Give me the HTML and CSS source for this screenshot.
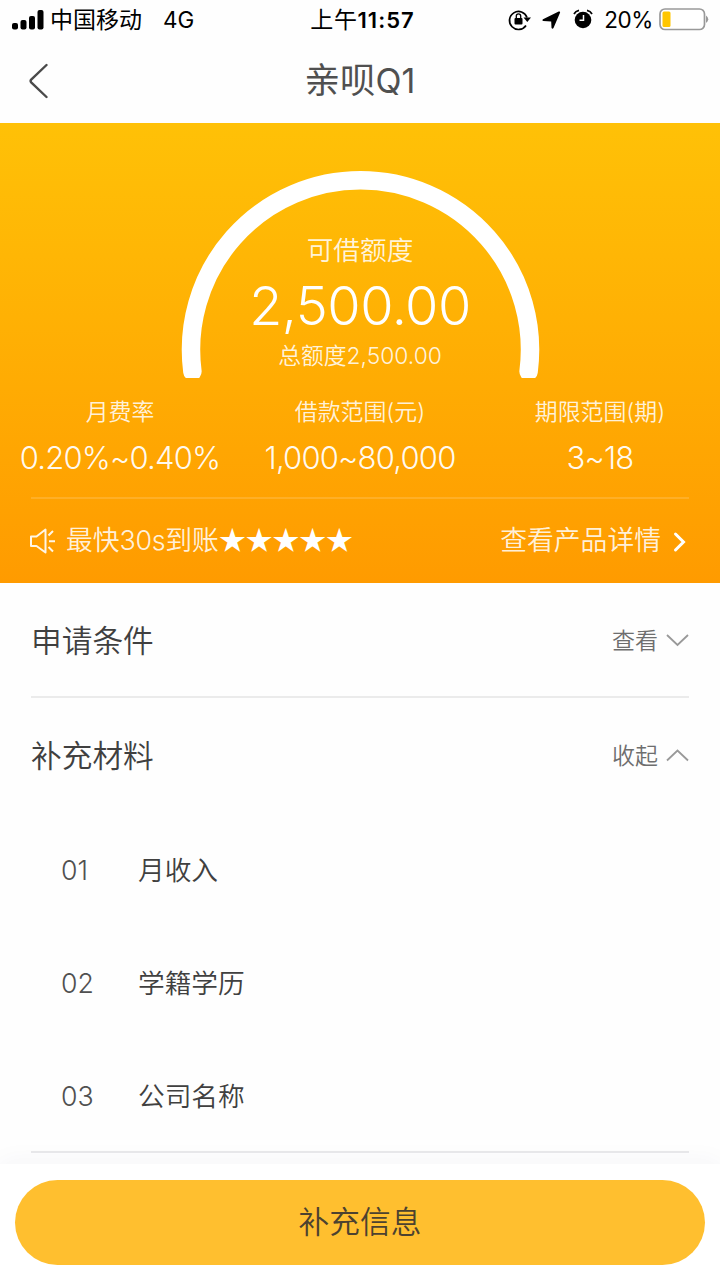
FILE: index.html
```
<!DOCTYPE html>
<html lang="zh-CN">
<head>
<meta charset="utf-8">
<title>亲呗Q1</title>
<link rel="stylesheet" href="styles.css">
</head>
<body>
<div class="app">
  <header class="status">
    <div class="status-left">
      <svg class="signal" width="32" height="20" viewBox="0 0 32 20"><rect x="0" y="13" width="6" height="6.5" rx="2"/><rect x="8.5" y="10" width="6" height="9.5" rx="2"/><rect x="17" y="6" width="6" height="13.5" rx="2"/><rect x="25.500" y="0" width="6" height="19.500" rx="2"/></svg>
      <span class="carrier">中国移动</span><span class="network">4G</span>
    </div>
    <div class="time">上午<b class="clock">11:57</b></div>
    <div class="status-right">
      <svg class="rotation" width="24" height="22" viewBox="0 0 24 22"><path d="M18 16.500A9 9 0 1 1 19 8.500" fill="none" stroke="#000" stroke-width="1.700"/><path d="M15.500 8.500h7.500l-3.700 4.500z"/><rect x="6.500" y="9" width="8" height="6.500" rx="1"/><path d="M8.300 9V7a2.200 2.200 0 0 1 4.400 0v2" fill="none" stroke="#000" stroke-width="1.300"/></svg>
      <svg class="location" width="19" height="18" viewBox="0 0 19 18"><path d="M1 8.200 16.700.6q1.800-.5 1.300 1.200L11.500 17q-1.200 1.500-2-.2L9.200 10.500 1.400 10q-1.700-.6-.4-1.800z"/></svg>
      <svg class="alarm" width="20" height="20" viewBox="0 0 20 20"><circle cx="10" cy="11" r="8.300"/><path d="M1 5Q2.500 2 6 1.300M14 1.300Q17.500 2 19 5" fill="none" stroke="#000" stroke-width="1.700"/><path d="M10.500 6v5.300H6.500" fill="none" stroke="#fff" stroke-width="1.500"/></svg>
      <span class="percent">20%</span>
      <svg class="battery" width="50" height="23" viewBox="0 0 50 23"><rect x="1" y="1" width="44.500" height="20.500" rx="5" fill="#fff" stroke="#999" stroke-width="1.700"/><rect x="3.500" y="3.500" width="8" height="15.500" rx="1.500" fill="#ffc600"/><path d="M47 7.500q4.500 3.700 0 7.500z" fill="#999"/></svg>
    </div>
  </header>
  <nav class="nav">
    <svg class="back" width="20" height="36" viewBox="0 0 20 36"><path d="M17.500 2 2.200 16.600q-1.200 1.400 0 2.800L17.500 34" fill="none" stroke="#4a4a4a" stroke-width="2.400" stroke-linecap="round"/></svg>
    <h1 class="title">亲呗<span class="title-code">Q1</span></h1>
    <span></span>
  </nav>
  <section class="hero">
    <div class="gauge">
      <svg class="arc" width="360" height="208" viewBox="0 0 360 208"><path d="M12.400 201.500A169.500 169.500 0 1 1 348.600 201.500" fill="none" stroke="#fff" stroke-width="18.500" stroke-linecap="round"/></svg>
      <div class="quota">
        <p class="quota-label">可借额度</p>
        <p class="quota-value">2,500.00</p>
        <p class="quota-total">总额度<span class="total-value">2,500.00</span></p>
      </div>
    </div>
    <div class="facts">
      <div class="fact"><p class="fact-label">月费率</p><p class="fact-value rate">0.20%~0.40%</p></div>
      <div class="fact"><p class="fact-label">借款范围(元)</p><p class="fact-value range">1,000~80,000</p></div>
      <div class="fact"><p class="fact-label">期限范围(期)</p><p class="fact-value">3~18</p></div>
    </div>
    <div class="notice">
      <svg class="horn" width="26" height="26" viewBox="0 0 26 26"><path d="M1 8.500H6.500L15.500 1.500V24.500L6.500 18H1z M18.500 7.500l4.500-4.500M19 13.200H25M18.500 19l4.500 4.500" fill="none" stroke="#fff" stroke-opacity=".9" stroke-width="2" stroke-linejoin="round"/></svg>
      <span class="notice-text">最快<span class="seconds">30s</span>到账</span>
      <span class="stars">★★★★★</span>
      <a class="detail">查看产品详情</a>
      <svg class="chevron" width="14" height="22" viewBox="0 0 14 22"><path d="M2.500 3 10.500 11 2.500 19" fill="none" stroke="#fff" stroke-width="3" stroke-linecap="round"/></svg>
    </div>
  </section>
  <main class="content">
    <section class="row first">
      <h2 class="row-title">申请条件</h2><span class="toggle">查看</span>
      <svg class="caret" width="24" height="14" viewBox="0 0 24 14"><path d="M2 2 12.500 12 23 2" fill="none" stroke="#999" stroke-width="1.800"/></svg>
    </section>
    <section class="row">
      <h2 class="row-title">补充材料</h2><span class="toggle">收起</span>
      <svg class="caret" width="24" height="14" viewBox="0 0 24 14"><path d="M2 12.500 12.500 2.500 23 12.500" fill="none" stroke="#999" stroke-width="1.800"/></svg>
    </section>
    <ol class="items">
      <li class="item"><span class="number">01</span><span class="name">月收入</span></li>
      <li class="item"><span class="number">02</span><span class="name">学籍学历</span></li>
      <li class="item"><span class="number">03</span><span class="name">公司名称</span></li>
    </ol>
  </main>
  <footer class="footer"><button class="submit">补充信息</button></footer>
</div>
</body>
</html>
```
FILE: styles.css
```
* { box-sizing: border-box; }
body { margin: 0; background: #fefefe; font-family: Inter, "Noto Sans CJK SC", sans-serif; color: #404040; }
h1, h2, p, ol { margin: 0; padding: 0; font-weight: 350; }
svg { display: block; flex: none; }
.app { width: 720px; height: 1280px; display: flex; flex-direction: column; overflow: hidden; white-space: nowrap; }
.status { height: 40px; display: grid; grid-template-columns: 1fr auto 1fr; align-items: center; padding: 0 11px 0 12px; color: #000; font-size: 23px; line-height: 40px; }
.status-left, .status-right { display: flex; align-items: center; }
.status-right { justify-content: flex-end; }
.signal { margin-top: -1px; }
.carrier { margin-left: 6px; }
.network { margin-left: 21px; font-size: 22.500px; }
.time { letter-spacing: .6px; padding-left: 4px; }
.clock { font-weight: 600; font-size: 22px; letter-spacing: 1px; }
.rotation { margin-top: -1px; }
.location { margin-left: 10px; }
.alarm { margin: -2px 0 0 12px; }
.percent { margin: 0 6px 0 11px; font-size: 22.500px; letter-spacing: -.4px; }
.battery { margin-top: -1px; }
.nav { height: 83px; display: grid; grid-template-columns: 1fr auto 1fr; align-items: center; padding: 0 29px; }
.back { margin-top: -2px; }
.title { font-size: 35.500px; line-height: 80px; padding-bottom: 1px; color: #505050; font-weight: 400; }
.title-code { font-size: 34px; }
.hero { height: 460px; background: linear-gradient(#ffc107, #ff9b00); padding-top: 47px; color: rgba(255,255,255,.87); font-weight: 350; }
.gauge { width: 360px; height: 208px; margin: 0 auto; display: grid; }
.arc, .quota { grid-area: 1 / 1; }
.quota { padding-top: 61px; text-align: center; }
.quota-label { font-size: 26.700px; line-height: 38px; }
.quota-value { font-size: 54px; line-height: 73px; letter-spacing: -.5px; font-weight: 300; color: #fff; }
.quota-total { font-size: 22.800px; line-height: 27px; }
.total-value { font-weight: 300; }
.facts { height: 119px; display: grid; grid-template-columns: repeat(3, 240px); padding-top: 18px; text-align: center; }
.fact-label { font-size: 22.900px; line-height: 33px; }
.fact-value { font-size: 31px; line-height: 57px; letter-spacing: -.8px; font-weight: 300; color: rgba(255,255,255,.95); }
.notice { height: 86px; margin: 0 31px; border-top: 2px solid rgba(255,255,255,.15); display: flex; align-items: center; font-size: 26.800px; line-height: 40px; padding-bottom: 2px; }
.horn { margin: 2px 0 0 -1px; }
.notice-text { margin-left: 10px; }
.seconds { font-weight: 300; letter-spacing: -.3px; }
.stars { color: #fff; font-family: "Noto Sans CJK SC", sans-serif; padding-bottom: 3px; }
.detail { margin-left: auto; }
.chevron { margin: 3px 2px 0 12px; }
.content { flex: 1; }
.row { height: 115px; margin: 0 31px; display: flex; align-items: center; padding-bottom: 4px; }
.row.first { border-bottom: 2px solid #ebebeb; padding-bottom: 2px; }
.row-title { font-size: 30.700px; margin-right: auto; }
.toggle { font-size: 23px; font-weight: 350; color: #6e6e6e; }
.caret { margin: 3px 0 0 7px; }
.items { list-style: none; margin: 0 31px; height: 340px; border-bottom: 2px solid #e9e9eb; }
.item { height: 113px; display: flex; align-items: center; padding-left: 30px; font-size: 26.700px; }
.number { width: 77px; color: #505050; font-weight: 300; padding-top: 1px; }
.name { padding-bottom: 2px; }
.footer { height: 116px; padding: 16px 15px; background: #fff; box-shadow: 0 -3px 24px rgba(40,40,90,.04); }
.submit { display: block; width: 690px; height: 85px; padding: 0 0 2px; border: 0; border-radius: 43px; background: #ffbf2f; color: #4c4230; font: 350 30.700px/83px Inter, "Noto Sans CJK SC", sans-serif; }
```
